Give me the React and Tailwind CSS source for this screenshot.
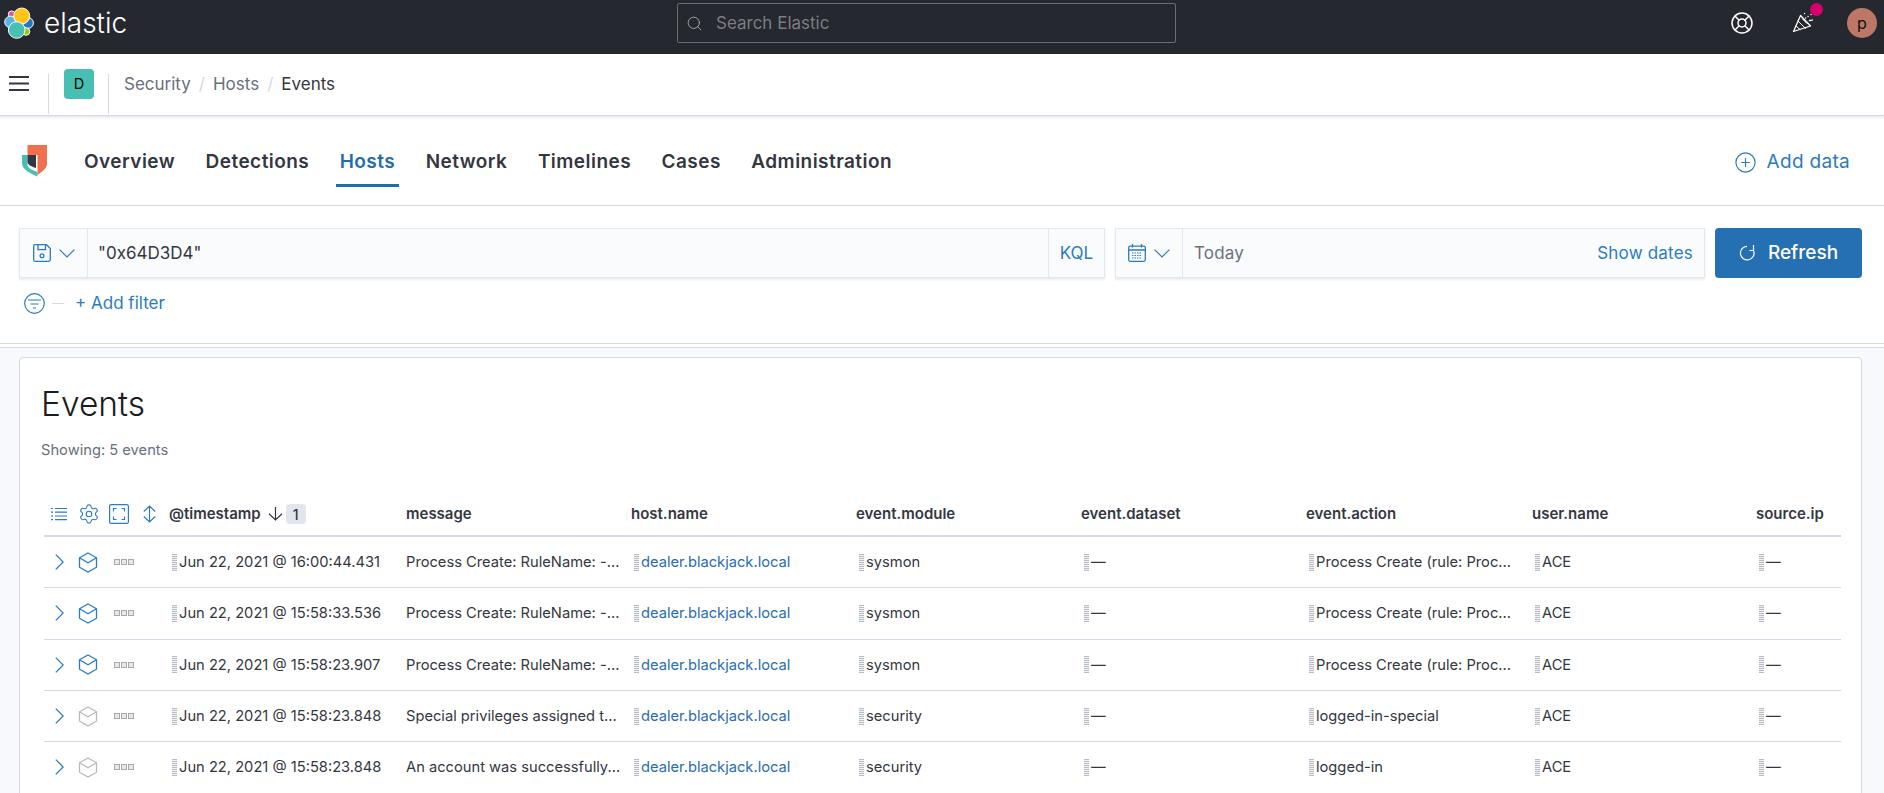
import React from "react";
import { LifeBuoy, Search, Settings, CirclePlus } from "lucide-react";

const font = { fontFamily: "Inter, 'Noto Sans', sans-serif" };
const BLUE = "#2b7bc0";

function ElasticLogo() {
  return (
    <svg width="32" height="32" viewBox="0 0 32 32" className="shrink-0">
      <circle cx="7.700" cy="7.300" r="3.400" fill="#f04e98" stroke="#fff" strokeWidth="1" />
      <circle cx="6.500" cy="15" r="5.800" fill="#53b4ec" stroke="#fff" strokeWidth="1" />
      <circle cx="24" cy="16" r="5.400" fill="#1f78c8" stroke="#fff" strokeWidth="1" />
      <circle cx="22" cy="24.500" r="3.800" fill="#93c90e" stroke="#fff" strokeWidth="1" />
      <circle cx="17.700" cy="9" r="8" fill="#fec514" stroke="#fff" strokeWidth="1" />
      <circle cx="12.700" cy="23" r="8.300" fill="#48c0b3" stroke="#fff" strokeWidth="1" />
    </svg>
  );
}

function SecurityLogo() {
  return (
    <svg width="25" height="32" viewBox="0 0 25 32" className="shrink-0">
      <path d="M5.500 0H25V19C25 23 20 27 15.500 30V10H5.500z" fill="#f26f4e" />
      <path d="M0 10H5.500V20C5.500 23 10 25 15.500 27V31.500C7 28 0 24 0 18z" fill="#47bfb2" />
      <path d="M5.500 10H14V23C9 21.500 5.500 19.500 5.500 17z" fill="#343741" />
    </svg>
  );
}

function PartyIcon() {
  return (
    <svg width="22" height="22" viewBox="0 0 22 22" fill="none" stroke="#fff" strokeWidth="1.300" strokeLinecap="round" strokeLinejoin="round">
      <path d="M1.500 19.500 8.500 3.500l10 10.500z" />
      <path d="M6 9l7.500 7.500M4 14l4 3.500M10.500 7l4.500 4.500" strokeWidth="1" />
      <path d="M12.500 1.500h.1M16 4.500h.1M13.500 6h.1M19 2.500h.1M20.500 8c-1 .5-2 .5-3 .5" />
    </svg>
  );
}

function Chevron({ down, color = BLUE }) {
  return down ? (
    <svg width="16" height="9" viewBox="0 0 16 9" fill="none" stroke={color} strokeWidth="1.200" className="shrink-0">
      <path d="M.6.6 8 8l7.400-7.400" />
    </svg>
  ) : (
    <svg width="9" height="16" viewBox="0 0 9 16" fill="none" stroke={color} strokeWidth="1.300" className="shrink-0">
      <path d="M.8.6 8.200 8 .8 15.400" />
    </svg>
  );
}

function Cube({ muted }) {
  return (
    <svg width="20" height="21" viewBox="0 0 20 21" fill="none" stroke={muted ? "#b9b9b9" : BLUE} strokeWidth="1.300" className="block">
      <path d="M10 1 18.500 5.800v9.400L10 20 1.500 15.200V5.800z" />
      <path d="M1.500 5.800 10 10.800l8.500-5" />
    </svg>
  );
}

function Handle() {
  return <span className="inline-block h-[17px] w-[5px] shrink-0 border-x border-dotted border-[#b4b9c2] bg-[repeating-linear-gradient(0deg,#b9bec7_0_1px,#f1f2f5_1px_2px)]" />;
}

function Dots() {
  return (
    <span className="flex gap-[1px]">
      <span className="h-[6px] w-[6px] border border-[#a9a9a9] bg-[#e8e8e8]" />
      <span className="h-[6px] w-[6px] border border-[#a9a9a9] bg-[#e8e8e8]" />
      <span className="h-[6px] w-[6px] border border-[#a9a9a9] bg-[#e8e8e8]" />
    </span>
  );
}

function SaveIcon() {
  return (
    <svg width="18" height="18" viewBox="0 0 18 18" fill="none" stroke={BLUE} strokeWidth="1.300" className="shrink-0">
      <path d="M2 .7h11.500L17.300 4.500V15.800a1.500 1.500 0 0 1-1.500 1.500H2.200A1.500 1.500 0 0 1 .7 15.800V2a1.300 1.300 0 0 1 1.300-1.300z" />
      <path d="M5 .7v5h7.500v-5" />
      <circle cx="9" cy="11.800" r="1.900" />
    </svg>
  );
}

function CalIcon() {
  return (
    <svg width="18" height="18" viewBox="0 0 18 18" fill="none" stroke={BLUE} strokeWidth="1.300" className="shrink-0">
      <rect x=".7" y="2.200" width="16.600" height="15.100" rx="1.500" />
      <path d="M.7 6h16.600M4.500 0v3.500M13.500 0v3.500" />
      <path d="M4 9h10M4 11.500h10M4 14h10" strokeWidth="1.200" strokeDasharray="1.500 1" />
    </svg>
  );
}

function RefreshIcon() {
  return (
    <svg width="16" height="16" viewBox="0 0 16 16" fill="none" stroke="#fff" strokeWidth="1.200" className="shrink-0">
      <path d="M8 1.300A6.800 6.800 0 1 0 14.700 6" />
      <path d="M14.500 0v5.500h-4" />
    </svg>
  );
}

function FilterIcon() {
  return (
    <svg width="21" height="21" viewBox="0 0 21 21" fill="none" stroke={BLUE} strokeWidth="1.200" className="shrink-0">
      <circle cx="10.500" cy="10.500" r="9.800" />
      <path d="M4 7h13M6.500 11h8M9 15h3" />
    </svg>
  );
}

function ListIcon() {
  return (
    <svg width="16" height="14" viewBox="0 0 16 14" fill="none" stroke={BLUE} strokeWidth="1.200" className="shrink-0">
      <path d="M0 1.500h2M4 1.500h12M0 5.200h2M4 5.200h12M0 9h2M4 9h12M0 12.700h2M4 12.700h12" />
    </svg>
  );
}

function FullScreen() {
  return (
    <svg width="20" height="20" viewBox="0 0 20 20" fill="none" stroke={BLUE} strokeWidth="1.200" className="block">
      <rect x=".6" y=".6" width="18.800" height="18.800" rx="1.500" />
      <path d="M4.500 7.500v-3h3M12.500 4.500h3v3M15.500 12.500v3h-3M7.500 15.500h-3v-3" />
    </svg>
  );
}

function DensityIcon() {
  return (
    <svg width="13" height="18" viewBox="0 0 13 18" fill="none" stroke={BLUE} strokeWidth="1.200" className="block">
      <path d="M.8 6.500 6.500 1l5.700 5.500M.8 11.500 6.500 17l5.700-5.500M6.500 1v16" />
    </svg>
  );
}

function ArrowDownIcon() {
  return (
    <svg width="15" height="14" viewBox="0 0 15 14" fill="none" stroke="#343741" strokeWidth="1.200" className="shrink-0">
      <path d="M7.500 0v13M1 6.800 7.500 13 14 6.800" />
    </svg>
  );
}

const rows = [
  { t: "Jun 22, 2021 @ 16:00:44.431", m: "Process Create: RuleName: -...", mod: "sysmon", a: "Process Create (rule: Proc...", on: true },
  { t: "Jun 22, 2021 @ 15:58:33.536", m: "Process Create: RuleName: -...", mod: "sysmon", a: "Process Create (rule: Proc...", on: true },
  { t: "Jun 22, 2021 @ 15:58:23.907", m: "Process Create: RuleName: -...", mod: "sysmon", a: "Process Create (rule: Proc...", on: true },
  { t: "Jun 22, 2021 @ 15:58:23.848", m: "Special privileges assigned t...", mod: "security", a: "logged-in-special", on: false },
  { t: "Jun 22, 2021 @ 15:58:23.848", m: "An account was successfully...", mod: "security", a: "logged-in", on: false },
];

const grid = "grid grid-cols-[125px_237px_225px_225px_225px_225px_226px_224px_85px]";
const tabs = ["Overview", "Detections", "Hosts", "Network", "Timelines", "Cases", "Administration"];

function Cell({ children }) {
  return (
    <div className="flex items-center gap-[2px] pl-[3px] text-[14.7px] text-[#343741] whitespace-nowrap">
      <Handle />
      <span>{children}</span>
    </div>
  );
}

export default function App() {
  return (
    <div style={font} className="h-[793px] w-full overflow-hidden bg-white text-[#343741]">
      <header className="flex h-[54px] items-center bg-[#25282f] pb-[8px] pl-[4px] pr-[7px]">
        <div className="flex w-[673px] items-center gap-[8px]">
          <ElasticLogo />
          <span className="text-[28px] font-light leading-none text-white">elastic</span>
        </div>
        <div className="flex h-[40px] w-[499px] items-center gap-[13px] rounded-[2px] border border-[#6a6c72] pl-[8px]">
          <Search size={17} strokeWidth={1} color="#c9cacc" />
          <span className="pt-[2px] text-[17px] text-[#7b7d82]">Search Elastic</span>
        </div>
        <div className="ml-auto flex items-center">
          <LifeBuoy size={24} strokeWidth={1.500} color="#fff" className="mr-[38px]" />
          <div className="relative mr-[33px]">
            <PartyIcon />
            <span className="absolute left-[17.500px] -top-[9.500px] h-[13px] w-[13px] rounded-full bg-[#d5006d]" />
          </div>
          <span className="flex h-[30px] w-[30px] items-center justify-center rounded-full bg-[#bd7767] text-[16px] text-[#111]">p</span>
        </div>
      </header>

      <div className="flex h-[62px] items-center border-b border-[#d3dae6] pb-[2px] pl-[9px] shadow-[0_2px_2px_rgba(152,162,179,0.2)]">
        <svg width="20" height="15" viewBox="0 0 20 15" fill="#343741" className="shrink-0">
          <rect width="20" height="2" y="0" />
          <rect width="20" height="2" y="6.500" />
          <rect width="20" height="2" y="13" />
        </svg>
        <span className="ml-[19px] h-[40px] w-px translate-y-[10px] bg-[#d3dae6]" />
        <span className="ml-[15px] flex h-[30px] w-[30px] items-center justify-center rounded-[4px] bg-[#47bfb2] text-[14.500px] text-black">D</span>
        <span className="ml-[14px] h-[40px] w-px translate-y-[10px] bg-[#d3dae6]" />
        <div className="ml-[15px] flex items-center pt-[2px] text-[17px]">
          <span className="text-[#69707d]">Security</span>
          <span className="mx-[8px] text-[#d3dae6]">/</span>
          <span className="text-[#69707d]">Hosts</span>
          <span className="mx-[8px] text-[#d3dae6]">/</span>
          <span className="text-[#343741]">Events</span>
        </div>
      </div>

      <nav className="flex h-[90px] items-center border-b border-[#d3dae6] pl-[22px] pr-[34px]">
        <SecurityLogo />
        <div className="ml-[33px] flex h-full items-center gap-[22.500px]">
          {tabs.map((t) => (
            <div key={t} className={"relative flex h-full items-center px-[4px] pt-[4px] text-[19px] font-semibold tracking-[0.450px] " + (t === "Hosts" ? "text-[#1f6cb0]" : "text-[#343741]")}>
              {t}
              {t === "Hosts" && <span className="absolute bottom-[18px] left-0 right-0 h-[3px] bg-[#1f6cb0]" />}
            </div>
          ))}
        </div>
        <div className="ml-auto flex items-center gap-[10px] pt-[4px] text-[19px] tracking-[0.300px]" style={{ color: BLUE }}>
          <CirclePlus size={23} strokeWidth={1.200} />
          Add data
        </div>
      </nav>

      <div className="h-[138px] border-b border-[#d3dae6] px-[19px] pt-[22px]">
        <div className="flex h-[50px] items-stretch">
          <div className="flex w-[1086px] items-stretch border border-[#e3e7ef] bg-[#fafbfd] shadow-[0_2px_2px_rgba(152,162,179,0.2)]">
            <div className="flex w-[68px] items-center justify-center gap-[8px] border-r border-[#e3e7ef]">
              <SaveIcon />
              <Chevron down />
            </div>
            <div className="flex flex-1 items-center pl-[10px] pt-[2px] text-[17px] text-[#343741]">"0x64D3D4"</div>
            <div className="flex w-[56px] items-center justify-center border-l border-[#e3e7ef] pt-[2px] text-[17px]" style={{ color: BLUE }}>KQL</div>
          </div>
          <div className="ml-[10px] flex w-[590px] items-stretch border border-[#e3e7ef] bg-[#fafbfd] shadow-[0_2px_2px_rgba(152,162,179,0.2)]">
            <div className="flex w-[67px] items-center justify-center gap-[8px] border-r border-[#e3e7ef]">
              <CalIcon />
              <Chevron down />
            </div>
            <div className="flex flex-1 items-center justify-between px-[11px] pt-[2px] text-[17px] tracking-[0.200px]">
              <span className="text-[#69707d]">Today</span>
              <span style={{ color: BLUE }}>Show dates</span>
            </div>
          </div>
          <div className="ml-[10px] flex w-[147px] items-center justify-center gap-[13px] rounded-[4px] bg-[#2470b3] text-[19px] font-medium text-white">
            <RefreshIcon />
            Refresh
          </div>
        </div>
        <div className="mt-[13px] flex items-center pl-[5px]">
          <FilterIcon />
          <span className="ml-[7px] h-px w-[12px] bg-[#d3dae6]" />
          <span className="ml-[11px] text-[17px]" style={{ color: BLUE }}>+ Add filter</span>
        </div>
      </div>

      <main className="mt-[3px] h-full border-t border-[#d3dae6] bg-[#f8f9fd] pl-[19px] pr-[22px] pt-[9px]">
        <section className="h-[460px] rounded-t-[4px] border border-[#d3dae6] bg-white pl-[24px] pr-[20px]">
          <h1 className="-ml-[3px] mt-[26px] text-[33.500px] font-light leading-[40px] text-[#1a1c21]">Events</h1>
          <p className="-ml-[3px] mt-[17px] text-[14.700px] leading-[18px] text-[#69707d]">Showing: 5 events</p>
          <div className={grid + " mt-[34px] h-[44px] items-center border-b-2 border-[#d3dae6] text-[15px] font-semibold text-[#343741]"}>
            <div className="flex items-center pl-[7px]">
              <ListIcon />
              <Settings size={22} strokeWidth={1.200} color={BLUE} className="ml-[11px]" />
              <span className="ml-[9px]"><FullScreen /></span>
              <span className="ml-[14px]"><DensityIcon /></span>
            </div>
            <div className="flex items-center">
              @timestamp
              <span className="ml-[7px]"><ArrowDownIcon /></span>
              <span className="ml-[3px] flex h-[20px] w-[20px] items-center justify-center rounded-[4px] bg-[#e0e5ee] text-[14px] font-medium">1</span>
            </div>
            {["message", "host.name", "event.module", "event.dataset", "event.action", "user.name", "source.ip"].map((h) => (
              <div key={h}>{h}</div>
            ))}
          </div>
          {rows.map((r, i) => (
            <div key={i} className={grid + " h-[51.330px] items-center border-b border-[#d3dae6]"}>
              <div className="flex items-center pl-[11px]">
                <Chevron />
                <span className="ml-[14px]"><Cube muted={!r.on} /></span>
                <span className="ml-[16px]"><Dots /></span>
              </div>
              <Cell>{r.t}</Cell>
              <div className="whitespace-nowrap text-[14.700px] text-[#343741]">{r.m}</div>
              <Cell><span className="text-[#2a6db0]">dealer.blackjack.local</span></Cell>
              <Cell>{r.mod}</Cell>
              <Cell>—</Cell>
              <Cell>{r.a}</Cell>
              <Cell>ACE</Cell>
              <Cell>—</Cell>
            </div>
          ))}
        </section>
      </main>
    </div>
  );
}
